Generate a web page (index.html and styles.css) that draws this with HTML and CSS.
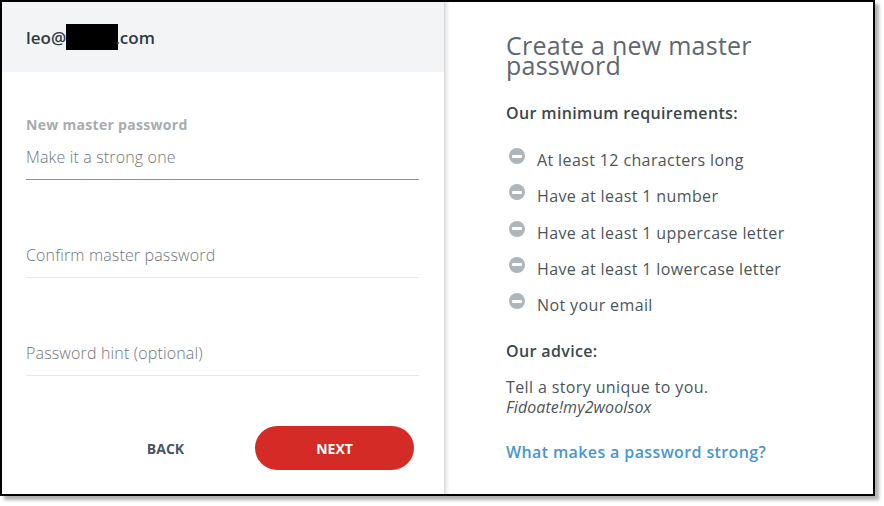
FILE: index.html
```html
<!DOCTYPE html>
<html>
<head>
<meta charset="utf-8">
<link rel="stylesheet" href="styles.css">
</head>
<body>
<div class="frame">
  <section class="left">
    <header class="account">
      <span class="email">leo@<span class="redact"></span>.com</span>
    </header>
    <div class="form">
      <div class="field">
        <div class="label">New master password</div>
        <div class="input active">Make it a strong one</div>
      </div>
      <div class="field">
        <div class="input">Confirm master password</div>
      </div>
      <div class="field">
        <div class="input">Password hint (optional)</div>
      </div>
      <div class="actions">
        <button class="btn back">BACK</button>
        <button class="btn next">NEXT</button>
      </div>
    </div>
  </section>
  <div class="divider"></div>
  <section class="right">
    <h1 class="title">Create a new master password</h1>
    <h2 class="sub">Our minimum requirements:</h2>
    <ul class="reqs">
      <li><span class="dot"></span>At least 12 characters long</li>
      <li><span class="dot"></span>Have at least 1 number</li>
      <li><span class="dot"></span>Have at least 1 uppercase letter</li>
      <li><span class="dot"></span>Have at least 1 lowercase letter</li>
      <li><span class="dot"></span>Not your email</li>
    </ul>
    <h2 class="sub advice-h">Our advice:</h2>
    <p class="advice">Tell a story unique to you.<br><em>Fidoate!my2woolsox</em></p>
    <a class="link" href="#">What makes a password strong?</a>
  </section>
</div>
</body>
</html>
```
FILE: styles.css
```css
html, body {
  margin: 0;
  padding: 0;
  background: #fff;
}
body {
  font-family: "Open Sans", "Liberation Sans", sans-serif;
  width: 884px;
  height: 506px;
  overflow: hidden;
}
.frame {
  box-sizing: border-box;
  width: 875px;
  height: 496px;
  border: 2px solid #000;
  box-shadow: 4px 4px 3px rgba(0, 0, 0, 0.3);
  display: flex;
  background: #fff;
}
.left {
  width: 442px;
  flex: none;
  display: flex;
  flex-direction: column;
}
.account {
  height: 70px;
  background: #f3f4f6;
  display: flex;
  align-items: center;
  padding-left: 24px;
}
.email {
  font-size: 17px;
  font-weight: 600;
  color: #2f3a42;
  display: flex;
  align-items: center;
}
.redact {
  display: inline-block;
  width: 52px;
  height: 26px;
  background: #000;
  margin-right: -3px;
}
.form {
  padding: 43px 25px 0 24px;
  display: flex;
  flex-direction: column;
}
.field {
  border-bottom: 1px solid #e6e8ea;
  padding-bottom: 10px;
  margin-top: 63px;
}
.field:first-child {
  margin-top: 0;
  border-bottom: 1px solid #5b9bd1;
}
.label {
  font-size: 14px;
  line-height: 20px;
  font-weight: 700;
  color: #a7acb0;
  margin-bottom: 10px;
  letter-spacing: 0.3px;
}
.input {
  font-size: 16px;
  line-height: 24px;
  font-weight: 300;
  color: #6f767b;
  letter-spacing: 0.15px;
}
.actions {
  display: flex;
  justify-content: flex-end;
  gap: 10px;
  margin-top: 50px;
  padding-right: 5px;
}
.btn {
  width: 159px;
  height: 44px;
  border: none;
  border-radius: 22px;
  font-family: "Open Sans", "Liberation Sans", sans-serif;
  font-size: 14px;
  font-weight: 700;
  background: transparent;
  padding: 0;
}
.back {
  color: #4a5560;
}
.next {
  background: #d42b26;
  color: #fff;
}
.divider {
  width: 5px;
  flex: none;
  background: linear-gradient(to right, #d4d4d4, #ececec 40%, #fbfbfb);
}
.right {
  flex: 1;
  padding: 33px 0 0 57px;
  color: #50585e;
}
.title {
  margin: 0;
  font-size: 25px;
  line-height: 20px;
  font-weight: 400;
  color: #5f676d;
  width: 275px;
  letter-spacing: 0.25px;
}
.sub {
  margin: 26px 0 0;
  font-size: 16px;
  line-height: 24px;
  font-weight: 600;
  color: #3d464d;
  letter-spacing: 0.36px;
}
.reqs {
  list-style: none;
  margin: 23px 0 0;
  padding: 0 0 0 3px;
  display: flex;
  flex-direction: column;
  gap: 12.25px;
}
.reqs li {
  display: flex;
  align-items: flex-start;
  gap: 12px;
  font-size: 16px;
  line-height: 24px;
  color: #4c555b;
  letter-spacing: 0.38px;
}
.dot {
  flex: none;
  width: 16px;
  height: 16px;
  border-radius: 50%;
  background: #aeb5bb;
  display: flex;
  align-items: center;
  justify-content: center;
}
.dot::after {
  content: "";
  width: 10px;
  height: 3px;
  background: #fff;
  border-radius: 1px;
}
.advice-h {
  margin-top: 22px;
}
.advice {
  margin: 14px 0 0;
  font-size: 16px;
  line-height: 20px;
  color: #4c555b;
  letter-spacing: 0.38px;
}
.advice em {
  font-style: italic;
  letter-spacing: 0.1px;
}
.link {
  display: block;
  margin-top: 23px;
  font-size: 16px;
  line-height: 24px;
  font-weight: 600;
  color: #4a96d1;
  text-decoration: none;
  letter-spacing: 0.38px;
}
```
